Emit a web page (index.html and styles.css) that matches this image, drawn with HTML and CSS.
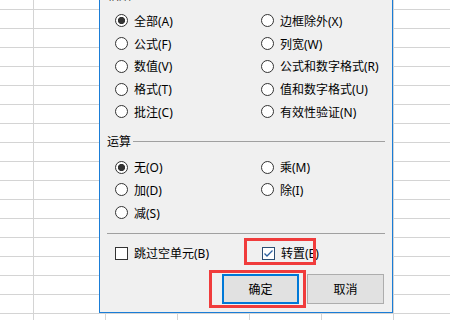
FILE: index.html
```html
<!DOCTYPE html>
<html lang="zh-CN">
<head>
<meta charset="utf-8">
<title>选择性粘贴</title>
<link rel="stylesheet" href="styles.css">
</head>
<body>
<div class="sheet">
  <div class="dialog">
    <div class="group-head"><span class="group-title">粘贴</span><span class="group-line"></span></div>
    <div class="options paste">
      <label class="opt"><span class="radio on"></span><span>全部(A)</span></label>
      <label class="opt"><span class="radio"></span><span>边框除外(X)</span></label>
      <label class="opt"><span class="radio"></span><span>公式(F)</span></label>
      <label class="opt"><span class="radio"></span><span>列宽(W)</span></label>
      <label class="opt"><span class="radio"></span><span>数值(V)</span></label>
      <label class="opt"><span class="radio"></span><span>公式和数字格式(R)</span></label>
      <label class="opt"><span class="radio"></span><span>格式(T)</span></label>
      <label class="opt"><span class="radio"></span><span>值和数字格式(U)</span></label>
      <label class="opt"><span class="radio"></span><span>批注(C)</span></label>
      <label class="opt"><span class="radio"></span><span>有效性验证(N)</span></label>
    </div>
    <div class="group-head ops-head"><span class="group-title">运算</span><span class="group-line"></span></div>
    <div class="options ops">
      <label class="opt"><span class="radio on"></span><span>无(O)</span></label>
      <label class="opt"><span class="radio"></span><span>乘(M)</span></label>
      <label class="opt"><span class="radio"></span><span>加(D)</span></label>
      <label class="opt"><span class="radio"></span><span>除(I)</span></label>
      <label class="opt"><span class="radio"></span><span>减(S)</span></label>
    </div>
    <div class="separator"></div>
    <div class="checks">
      <label class="opt"><span class="checkbox"></span><span>跳过空单元(B)</span></label>
      <label class="opt opt-right"><span class="checkbox checked"><svg width="13" height="13" viewBox="0 0 13 13"><polyline points="2.5,6.5 5,9 10.5,3.5" fill="none" stroke="#2b5f9e" stroke-width="1.3"/></svg></span><span>转置(E)</span></label>
    </div>
    <div class="buttons">
      <button class="btn default">确定</button>
      <button class="btn">取消</button>
    </div>
  </div>
  <div class="mark mark-transpose"></div>
  <div class="mark mark-ok"></div>
</div>
</body>
</html>
```
FILE: styles.css
```css
* { box-sizing: border-box; }
html, body { margin: 0; padding: 0; }
body {
  font-family: "Noto Sans", "Noto Sans CJK SC", sans-serif;
  font-size: 12px;
  color: #000;
}
.sheet {
  position: relative;
  width: 450px;
  height: 320px;
  overflow: hidden;
  background-color: #fff;
  background-image:
    linear-gradient(to right, #d4d4d4 1px, transparent 1px),
    linear-gradient(to bottom, #d4d4d4 1px, transparent 1px);
  background-size: 72px 100%, 100% 19px;
  background-position: 33px 0, 0 9px;
}
.dialog {
  position: absolute;
  left: 99px;
  top: -20px;
  bottom: 7px;
  width: 294px;
  background: #f0f0f0;
  border: 1px solid #1a7dd7;
  padding: 5px 7px 0 7px;
  display: flex;
  flex-direction: column;
}
.group-head {
  height: 20px;
  display: flex;
  align-items: center;
  gap: 2px;
}
.group-title { line-height: 20px; }
.group-line {
  flex: 1;
  height: 1px;
  background: #a0a0a0;
}
.ops-head { margin-top: 8.5px; }
.options {
  display: grid;
  grid-template-columns: 146px 1fr;
  grid-auto-rows: 22.75px;
  padding-left: 8px;
}
.paste { margin-top: 3.5px; }
.ops { margin-top: 4px; }
.opt {
  display: flex;
  align-items: center;
  gap: 6px;
  white-space: nowrap;
}
.radio {
  width: 13px;
  height: 13px;
  flex: none;
  border: 1px solid #333;
  border-radius: 50%;
  background: #fff;
}
.radio.on {
  background: radial-gradient(circle, #333 3.3px, #fff 3.9px);
}
.separator {
  margin-top: 9px;
  height: 1px;
  background: #a0a0a0;
}
.checks {
  margin-top: 9px;
  height: 20px;
  display: grid;
  grid-template-columns: 147px 1fr;
  padding-left: 8px;
}
.checkbox {
  width: 13px;
  height: 13px;
  flex: none;
  border: 1px solid #333;
  background: #fff;
  display: flex;
}
.checkbox svg { margin: -1px; }
.checkbox.checked { border-color: #2b4d73; }
.buttons {
  margin-top: 11px;
  display: flex;
  justify-content: flex-end;
  gap: 8px;
  padding-right: 1px;
}
.btn {
  width: 77px;
  height: 30px;
  background: #e1e1e1;
  border: 1px solid #adadad;
  font: inherit;
  color: #000;
  padding: 0;
}
.btn.default { border: 2px solid #0078d7; }
.mark {
  position: absolute;
  border: 3px solid #f03c3c;
}
.mark-transpose { left: 244px; top: 238px; width: 72px; height: 27px; }
.mark-ok { left: 209px; top: 270px; width: 97px; height: 38px; }
```
